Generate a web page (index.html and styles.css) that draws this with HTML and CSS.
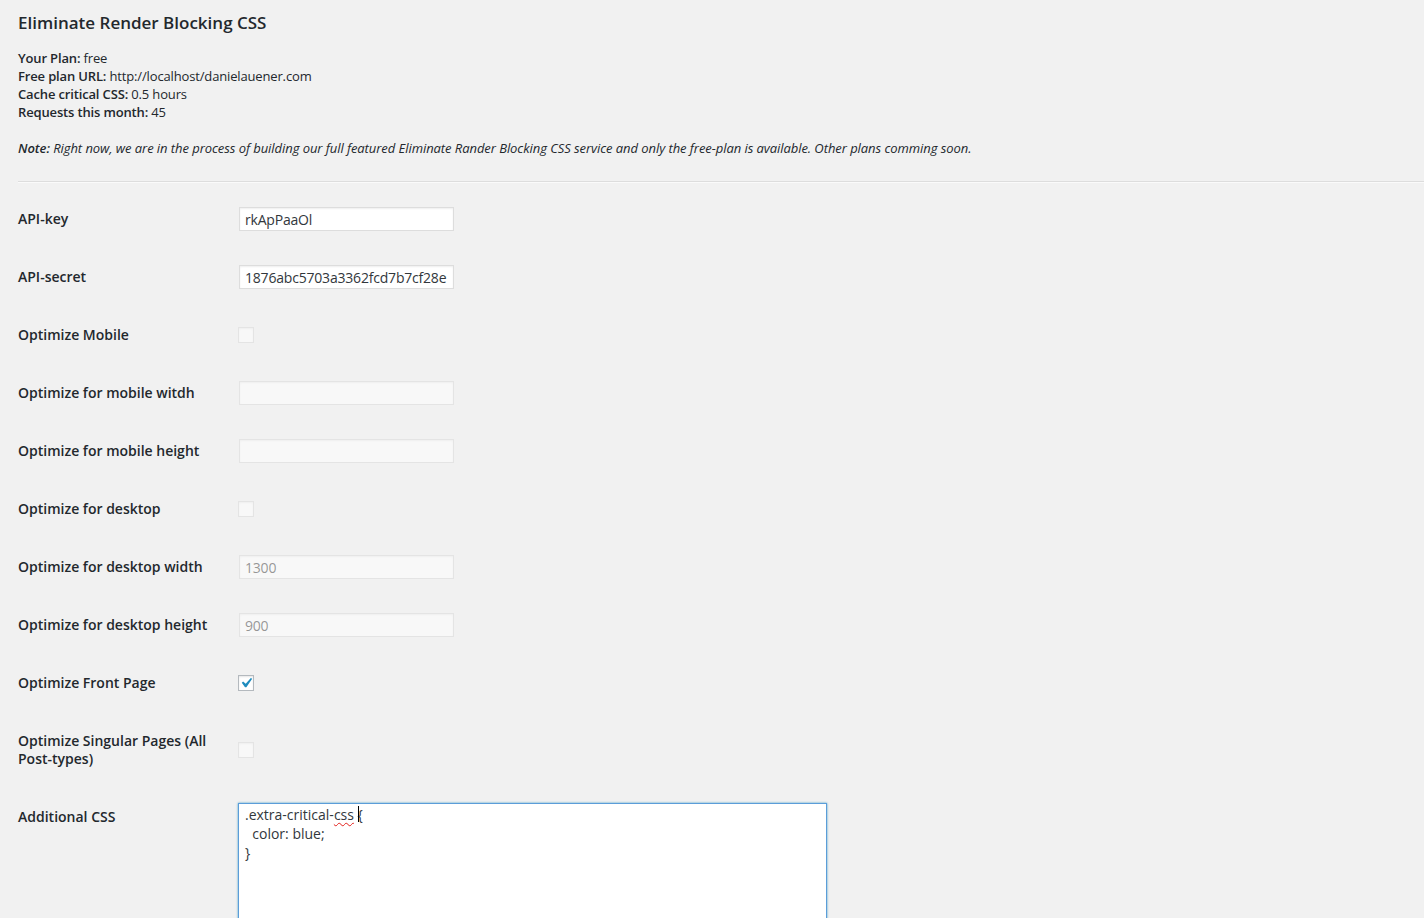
FILE: index.html
```html
<!DOCTYPE html>
<html lang="en">
<head>
  <meta charset="UTF-8" />
  <title>Eliminate Render Blocking CSS</title>
  <link rel="stylesheet" href="styles.css">
</head>
<body>
  <div class="wrap">
    <h2>Eliminate Render Blocking CSS</h2>
    <p class="plan-info">
      <strong>Your Plan:</strong> free<br>
      <strong>Free plan URL:</strong> http://localhost/danielauener.com<br>
      <strong>Cache critical CSS:</strong> 0.5 hours<br>
      <strong>Requests this month:</strong> 45
    </p>
    <p class="note"><em><strong>Note:</strong> Right now, we are in the process of building our full featured Eliminate Rander Blocking CSS service and only the free-plan is available. Other plans comming soon.</em></p>
    <hr>

    <table class="form-table">
      <tr>
        <th>API-key</th>
        <td><input type="text" class="regular-text" value="rkApPaaOl"></td>
      </tr>
      <tr>
        <th>API-secret</th>
        <td><input type="text" class="regular-text" value="1876abc5703a3362fcd7b7cf28e"></td>
      </tr>
      <tr>
        <th>Optimize Mobile</th>
        <td><input type="checkbox" disabled></td>
      </tr>
      <tr>
        <th>Optimize for mobile witdh</th>
        <td><input type="text" class="regular-text" disabled></td>
      </tr>
      <tr>
        <th>Optimize for mobile height</th>
        <td><input type="text" class="regular-text" disabled></td>
      </tr>
      <tr>
        <th>Optimize for desktop</th>
        <td><input type="checkbox" disabled></td>
      </tr>
      <tr>
        <th>Optimize for desktop width</th>
        <td><input type="text" class="regular-text" value="1300" disabled></td>
      </tr>
      <tr>
        <th>Optimize for desktop height</th>
        <td><input type="text" class="regular-text" value="900" disabled></td>
      </tr>
      <tr>
        <th>Optimize Front Page</th>
        <td><input type="checkbox" checked></td>
      </tr>
      <tr>
        <th>Optimize Singular Pages (All Post-types)</th>
        <td><input type="checkbox" disabled></td>
      </tr>
      <tr>
        <th>Additional CSS</th>
        <td>
          <div class="css-editor">.extra-critical-<span class="misspelled">css</span> {
  color: blue;
}</div>
        </td>
      </tr>
    </table>
  </div>
</body>
</html>
```

FILE: styles.css
```css
body {
  margin: 0;
  background: #f1f1f1;
  color: #23282d;
  font-family: "Open Sans", sans-serif;
  font-size: 13px;
  line-height: 1.4;
}

.wrap {
  padding: 0 0 40px 18px;
}

h2 {
  margin: 0;
  padding-top: 12px;
  font-size: 17px;
  font-weight: 600;
  line-height: 1.3;
}

.plan-info {
  margin: 15px 0 0;
  line-height: 18px;
  letter-spacing: -0.15px;
}

.plan-info strong,
.note strong {
  font-weight: 600;
}

.note {
  margin: 18px 0 0;
  line-height: 18px;
  letter-spacing: -0.06px;
}

hr {
  margin: 24px 0 0;
  border: 0;
  border-top: 1px solid #ddd;
  border-bottom: 1px solid #fafafa;
}

.form-table {
  margin-top: 7px;
  border-collapse: collapse;
}

.form-table th {
  width: 200px;
  padding: 20px 10px 20px 0;
  vertical-align: top;
  text-align: left;
  font-size: 14px;
  font-weight: 600;
  line-height: 18px;
}

.form-table td {
  padding: 15px 10px;
  vertical-align: middle;
  font-size: 14px;
  line-height: 18px;
}

.regular-text {
  display: block;
  box-sizing: border-box;
  width: 215px;
  height: 24px;
  margin: 1px;
  padding: 3px 5px;
  border: 1px solid #ddd;
  background: #fff;
  color: #32373c;
  font-family: inherit;
  font-size: 14px;
  line-height: 16px;
  letter-spacing: -0.2px;
  box-shadow: inset 0 1px 2px rgba(0, 0, 0, .07);
  outline: none;
}

.regular-text:disabled {
  background: rgba(255, 255, 255, .5);
  border-color: rgba(222, 222, 222, .75);
  color: rgba(51, 51, 51, .5);
  box-shadow: inset 0 1px 2px rgba(0, 0, 0, .04);
}

input[type="checkbox"] {
  -webkit-appearance: none;
  appearance: none;
  display: block;
  width: 16px;
  height: 16px;
  margin: 0;
  border: 1px solid #b4b9be;
  background: #fff center / 20px 20px no-repeat;
  box-shadow: inset 0 1px 2px rgba(0, 0, 0, .1);
}

/* dashicons "yes" tick */
input[type="checkbox"]:checked {
  background-image: url("data:image/svg+xml,%3Csvg xmlns='http://www.w3.org/2000/svg' viewBox='0 0 20 20'%3E%3Cpath fill='%231e8cbe' d='M14.83 4.89l1.34.94-5.81 8.38H9.02L5.78 9.67l1.34-1.25 2.57 2.4z'/%3E%3C/svg%3E");
}

input[type="checkbox"]:disabled {
  background-color: rgba(255, 255, 255, .5);
  border-color: rgba(222, 222, 222, .75);
  box-shadow: inset 0 1px 2px rgba(0, 0, 0, .04);
}

.css-editor {
  box-sizing: border-box;
  width: 589px;
  height: 160px;
  padding: 1px 6px;
  border: 1px solid #5b9dd9;
  background: #fff;
  color: #32373c;
  font-size: 14px;
  line-height: 19px;
  white-space: pre;
  box-shadow: 0 0 2px rgba(30, 140, 190, .8);
}

.misspelled {
  position: relative;
  text-decoration: underline wavy #e2201c;
  text-decoration-thickness: 1px;
  text-underline-offset: 2px;
}

/* text cursor sitting just before the brace */
.misspelled::after {
  content: "";
  position: absolute;
  top: 1px;
  right: -5px;
  height: 16px;
  border-left: 1px solid #000;
}
```
